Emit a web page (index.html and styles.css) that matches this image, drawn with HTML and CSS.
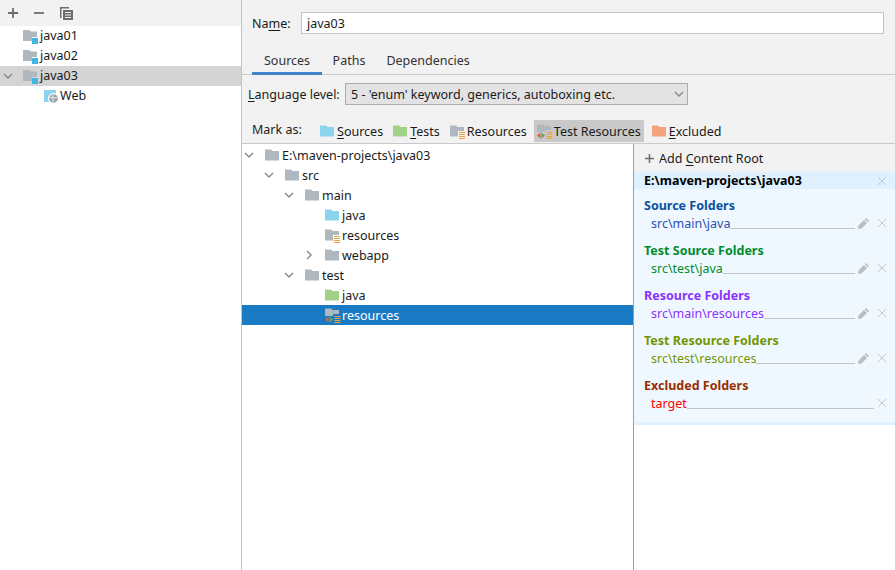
FILE: index.html
```html
<!DOCTYPE html>
<html lang="en">
<head>
<meta charset="utf-8">
<title>Project Structure</title>
<link rel="stylesheet" href="styles.css">
</head>
<body>
<svg class="defs" width="0" height="0" aria-hidden="true">
  <symbol id="folder" viewBox="0 0 16 16"><path fill="currentColor" d="M0 2.500h6l1.500 1.500H14v9.500H0z"/></symbol>
  <symbol id="chev-down" viewBox="0 0 10 10"><path d="M1 3l4 4 4-4" fill="none" stroke="currentColor" stroke-width="1.500"/></symbol>
  <symbol id="chev-right" viewBox="0 0 10 10"><path d="M3 1l4 4-4 4" fill="none" stroke="currentColor" stroke-width="1.500"/></symbol>
  <symbol id="module" viewBox="0 0 16 16"><path fill="#afb8bf" d="M0 2h6l2 1.500h6V9H9v4H0z"/><rect x="9" y="10" width="6" height="6" fill="#40b6e0"/></symbol>
  <symbol id="res" viewBox="0 0 16 16"><path fill="#afb8bf" d="M0 2.500h6l1.500 1.500H14v4H8v5.500H0z"/><path stroke="#e8a33d" stroke-width="1" d="M9 9.500h6M9 11.500h6M9 13.500h6M9 15.500h6"/></symbol>
  <symbol id="testres" viewBox="0 0 16 16"><path fill="#afb8bf" d="M0 1.500h6L7.500 3H14v4H8v2H0z"/><path fill="#e05d3b" d="M3.500 9.500v6L0 12.500z"/><path fill="#59a869" d="M4.500 9.500v6L8 12.500z"/><path stroke="#e8a33d" stroke-width="1" d="M9.500 9.500h6M9.500 11.500h6M9.500 13.500h6M9.500 15.500h6"/></symbol>
  <symbol id="web" viewBox="0 0 16 16"><rect x="0" y="2" width="12" height="12" fill="#8cd3ed"/><circle cx="9.500" cy="10.500" r="5.500" fill="#fff"/><circle cx="9.500" cy="10.500" r="4.300" fill="#9aa3a9"/><path d="M6 9.500c2-1 4 1.500 7 0M9 7v7" stroke="#fff" stroke-width=".8" fill="none"/></symbol>
  <symbol id="pencil" viewBox="0 0 11 11"><path fill="currentColor" d="M8 0l3 3-1.300 1.300-3-3zM6 2l3 3-5.500 5.500L0 11l.5-3.500z"/></symbol>
  <symbol id="close" viewBox="0 0 10 10"><path d="M1 1l8 8M9 1l-8 8" stroke="currentColor" fill="none" stroke-width="1"/></symbol>
</svg>

<div class="app">
  <aside class="left">
    <div class="left-bar">
      <svg class="tool" viewBox="0 0 12 12"><path d="M6 1v10M1 6h10" stroke="#6e6e6e" stroke-width="1.800"/></svg>
      <svg class="tool" viewBox="0 0 12 12"><path d="M1 6h10" stroke="#6e6e6e" stroke-width="1.800"/></svg>
      <svg class="tool-copy" viewBox="0 0 13 13"><path d="M0 0h9v1.500H1.500V11H0z" fill="#6e6e6e"/><path d="M3 3h10v10H3z" fill="#6e6e6e"/><path d="M5 5.500h6M5 8h6M5 10.500h6" stroke="#f2f2f2" stroke-width="1"/></svg>
    </div>
    <div class="lrow"><span class="lchev"></span><svg class="ic"><use href="#module"/></svg><span>java01</span></div>
    <div class="lrow"><span class="lchev"></span><svg class="ic"><use href="#module"/></svg><span>java02</span></div>
    <div class="lrow sel"><span class="lchev"><svg class="chev"><use href="#chev-down"/></svg></span><svg class="ic"><use href="#module"/></svg><span>java03</span></div>
    <div class="lrow web"><span class="lchev"></span><svg class="ic"><use href="#web"/></svg><span>Web</span></div>
  </aside>

  <main class="right">
    <div class="name-row">
      <label class="name-label">Na<u>m</u>e:</label>
      <div class="input">java03</div>
    </div>
    <nav class="tabs">
      <span class="tab active">Sources</span>
      <span class="tab">Paths</span>
      <span class="tab">Dependencies</span>
    </nav>
    <div class="lang-row">
      <label><u>L</u>anguage level:</label>
      <div class="combo"><span>5 - 'enum' keyword, generics, autoboxing etc.</span><svg class="chev combo-chev"><use href="#chev-down"/></svg></div>
    </div>
    <div class="mark-row">
      <span class="mark-label">Mark as:</span>
      <span class="mark m-src"><svg class="ic c-src"><use href="#folder"/></svg><span><u>S</u>ources</span></span>
      <span class="mark m-test"><svg class="ic c-test"><use href="#folder"/></svg><span><u>T</u>ests</span></span>
      <span class="mark m-res"><svg class="ic"><use href="#res"/></svg><span>Resources</span></span>
      <span class="mark on"><svg class="ic"><use href="#testres"/></svg><span>Test Resources</span></span>
      <span class="mark m-exc"><svg class="ic c-exc"><use href="#folder"/></svg><span><u>E</u>xcluded</span></span>
    </div>
    <div class="split">
      <section class="tree">
        <div class="row d0"><span class="slot"><svg class="chev"><use href="#chev-down"/></svg></span><svg class="ic c-grey"><use href="#folder"/></svg><span class="label">E:\maven-projects\java03</span></div>
        <div class="row d1"><span class="slot"><svg class="chev"><use href="#chev-down"/></svg></span><svg class="ic c-grey"><use href="#folder"/></svg><span class="label">src</span></div>
        <div class="row d2"><span class="slot"><svg class="chev"><use href="#chev-down"/></svg></span><svg class="ic c-grey"><use href="#folder"/></svg><span class="label">main</span></div>
        <div class="row d3"><span class="slot"></span><svg class="ic c-src"><use href="#folder"/></svg><span class="label">java</span></div>
        <div class="row d3"><span class="slot"></span><svg class="ic"><use href="#res"/></svg><span class="label">resources</span></div>
        <div class="row d3"><span class="slot"><svg class="chev"><use href="#chev-right"/></svg></span><svg class="ic c-grey"><use href="#folder"/></svg><span class="label">webapp</span></div>
        <div class="row d2"><span class="slot"><svg class="chev"><use href="#chev-down"/></svg></span><svg class="ic c-grey"><use href="#folder"/></svg><span class="label">test</span></div>
        <div class="row d3"><span class="slot"></span><svg class="ic c-test"><use href="#folder"/></svg><span class="label">java</span></div>
        <div class="row d3 active"><span class="slot"></span><svg class="ic"><use href="#testres"/></svg><span class="label">resources</span></div>
      </section>
      <section class="roots">
        <div class="add-root"><svg class="add-ic" viewBox="0 0 12 12"><path d="M6 1v10M1 6h10" stroke="#6e6e6e" stroke-width="1.700"/></svg><span class="label">Add <u>C</u>ontent Root</span></div>
        <div class="root-head"><span>E:\maven-projects\java03</span><svg class="x"><use href="#close"/></svg></div>
        <div class="root-body">
          <div class="group g-src">
            <div class="g-title">Source Folders</div>
            <div class="g-row"><span class="label">src\main\java</span><i class="rule"></i><svg class="pen"><use href="#pencil"/></svg><svg class="x"><use href="#close"/></svg></div>
          </div>
          <div class="group g-test">
            <div class="g-title">Test Source Folders</div>
            <div class="g-row"><span class="label">src\test\java</span><i class="rule"></i><svg class="pen"><use href="#pencil"/></svg><svg class="x"><use href="#close"/></svg></div>
          </div>
          <div class="group g-res">
            <div class="g-title">Resource Folders</div>
            <div class="g-row"><span class="label">src\main\resources</span><i class="rule"></i><svg class="pen"><use href="#pencil"/></svg><svg class="x"><use href="#close"/></svg></div>
          </div>
          <div class="group g-tres">
            <div class="g-title">Test Resource Folders</div>
            <div class="g-row"><span class="label">src\test\resources</span><i class="rule"></i><svg class="pen"><use href="#pencil"/></svg><svg class="x"><use href="#close"/></svg></div>
          </div>
          <div class="group g-exc">
            <div class="g-title">Excluded Folders</div>
            <div class="g-row"><span class="label">target</span><i class="rule"></i><svg class="x"><use href="#close"/></svg></div>
          </div>
        </div>
        <div class="root-foot"></div>
      </section>
    </div>
  </main>
</div>
</body>
</html>
```

FILE: styles.css
```css
* { box-sizing: border-box; }
html, body { margin: 0; height: 100%; }
body { font: 12.5px/18px "Noto Sans", "Open Sans", sans-serif; color: #1a1a1a; background: #f2f2f2; overflow: hidden; }
.defs { position: absolute; }
svg { display: block; flex: none; }
u { text-underline-offset: 2px; }
.app { display: flex; height: 570px; }
.label { padding-top: 2px; }

.left { width: 242px; flex: none; background: #fff; border-right: 1px solid #c4c4c4; }
.left-bar { height: 26px; background: #f2f2f2; display: flex; align-items: center; padding: 0 0 0 7px; gap: 14px; }
.tool { width: 12px; height: 12px; }
.tool-copy { width: 13px; height: 13px; margin-left: 1px; }
.lrow { height: 20px; display: flex; align-items: center; }
.lrow.sel { background: #d4d4d4; }
.lrow.web { padding-left: 21px; }
.lchev { width: 23px; flex: none; padding-left: 3px; color: #8c8c8c; }
.ic { width: 16px; height: 16px; }
.lrow .ic { margin-right: 1px; }
.lrow.web .ic { margin-right: 0; }
.chev { width: 10px; height: 10px; }

.right { flex: 1; min-width: 0; display: flex; flex-direction: column; }
.name-row { height: 46px; display: flex; align-items: center; padding: 0 11px 0 10px; }
.name-label { width: 49px; flex: none; padding-top: 2px; }
.input { flex: 1; height: 22px; background: #fff; border: 1px solid #c4c4c4; line-height: 22px; padding-left: 5px; }
.tabs { height: 29px; display: flex; padding-left: 10px; border-bottom: 1px solid #c9c9c9; }
.tab { padding: 6px 10.500px 0; height: 28px; color: #333; }
.tab.active { border-bottom: 3px solid #4083c9; height: 29px; padding: 6px 12px 0; }
.lang-row { height: 37px; display: flex; align-items: center; padding: 0 0 0 6px; }
.lang-row label { width: 97px; flex: none; padding-top: 2px; }
.combo { width: 343px; height: 22px; background: #e3e3e3; border: 1px solid #adadad; display: flex; align-items: center; justify-content: space-between; padding: 0 3px 0 5px; }
.combo span { padding-top: 2px; }
.combo-chev { color: #8c8c8c; }
.mark-row { height: 32px; display: flex; align-items: flex-end; border-bottom: 1px solid #c9c9c9; padding: 0 0 1px 10px; }
.mark-label { width: 65px; flex: none; height: 23px; line-height: 22px; }
.mark { display: flex; align-items: center; height: 22px; padding: 0 3px; }
.mark .ic { margin-right: 1px; }
.mark span { padding-top: 2px; }
.m-src { margin-right: 4px; }
.m-test { margin-right: 4px; }
.m-res { margin-right: 4px; }
.mark.on { background: #c9c9c9; margin-right: 5px; }
.c-grey { color: #afb8bf; }
.c-src { color: #8cd3ed; }
.c-test { color: #a1d189; }
.c-exc { color: #f4a47c; }

.split { flex: 1; display: flex; min-height: 0; }
.tree { width: 392px; flex: none; background: #fff; border-right: 1px solid #9e9e9e; padding-top: 1px; }
.row { height: 20px; display: flex; align-items: center; }
.row .ic { margin-right: 1px; }
.slot { width: 21px; flex: none; color: #8c8c8c; }
.d0 { padding-left: 2px; }
.d1 { padding-left: 22px; }
.d2 { padding-left: 42px; }
.d3 { padding-left: 62px; }
.row.active { background: #1a7bc4; color: #fff; }

.roots { flex: 1; min-width: 0; background: #fff; display: flex; flex-direction: column; }
.add-root { height: 28px; background: #f2f2f2; display: flex; align-items: center; gap: 4px; padding-left: 10px; }
.add-ic { width: 11px; height: 11px; }
.root-head { height: 17px; background: #dff1ff; display: flex; align-items: center; justify-content: space-between; padding: 0 8px 0 10px; font-weight: 700; color: #000; }
.x { width: 10px; height: 10px; color: #c3c8cc; }
.pen { width: 11px; height: 11px; color: #b9bec2; margin-left: 3px; margin-right: 8px; }
.root-body { background: #f0f8ff; padding-top: 7px; height: 233px; }
.root-foot { height: 3px; background: #dff1ff; }
.group { height: 45px; padding: 0 8px 0 10px; }
.g-title { height: 18px; font-weight: 700; padding-top: 1px; }
.g-row { height: 18px; display: flex; align-items: center; padding-left: 7px; }
.rule { align-self: flex-start; flex: 1; height: 7px; margin-top: 8px; border-bottom: 1px solid #bfc4c9; }
.g-exc .rule { margin-right: 3px; }
.g-src .g-title { color: #0a50a1; }
.g-src .g-row .label { color: #2a4fb0; }
.g-test .g-title { color: #008c2e; }
.g-test .g-row .label { color: #008c2e; }
.g-res .g-title { color: #8b32ff; }
.g-res .g-row .label { color: #8b32ff; }
.g-tres .g-title { color: #739503; }
.g-tres .g-row .label { color: #739503; }
.g-exc .g-title { color: #992e00; }
.g-exc .g-row .label { color: #ff0000; }
```
